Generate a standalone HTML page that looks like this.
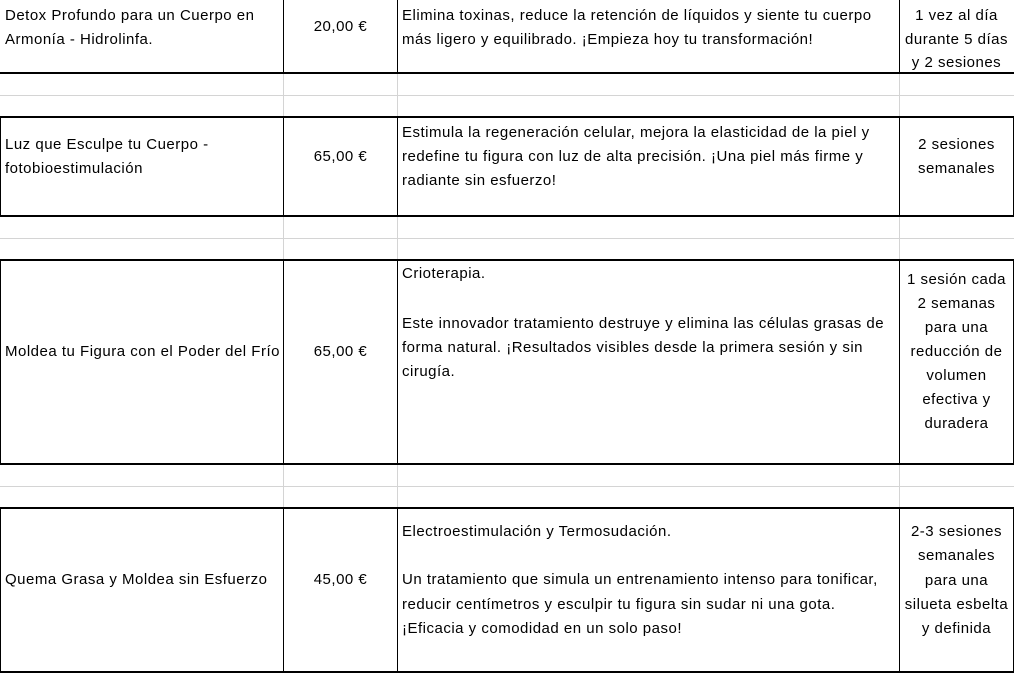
<!DOCTYPE html>
<html><head><meta charset="utf-8"><style>
body{margin:0;width:1014px;height:673px;background:#fff;position:relative;overflow:hidden;font-family:"Liberation Sans",sans-serif;font-size:15px;letter-spacing:0.5px;color:#000}
.h,.v{position:absolute;background:#000}
.g{position:absolute;background:#d4d4d4}
.t{position:absolute;line-height:24px;white-space:nowrap;margin-top:2px}
.c{text-align:center}
</style></head><body>
<div class="g" style="left:0;top:95px;width:1014px;height:1px"></div>
<div class="g" style="left:0;top:238px;width:1014px;height:1px"></div>
<div class="g" style="left:0;top:486px;width:1014px;height:1px"></div>
<div class="g" style="left:283px;top:73px;width:1px;height:44px"></div>
<div class="g" style="left:397px;top:73px;width:1px;height:44px"></div>
<div class="g" style="left:899px;top:73px;width:1px;height:44px"></div>
<div class="g" style="left:283px;top:216px;width:1px;height:44px"></div>
<div class="g" style="left:397px;top:216px;width:1px;height:44px"></div>
<div class="g" style="left:899px;top:216px;width:1px;height:44px"></div>
<div class="g" style="left:283px;top:464px;width:1px;height:44px"></div>
<div class="g" style="left:397px;top:464px;width:1px;height:44px"></div>
<div class="g" style="left:899px;top:464px;width:1px;height:44px"></div>
<div class="h" style="left:0;top:72px;width:1014px;height:2px"></div>
<div class="h" style="left:0;top:116px;width:1014px;height:2px"></div>
<div class="h" style="left:0;top:215px;width:1014px;height:2px"></div>
<div class="h" style="left:0;top:259px;width:1014px;height:2px"></div>
<div class="h" style="left:0;top:463px;width:1014px;height:2px"></div>
<div class="h" style="left:0;top:507px;width:1014px;height:2px"></div>
<div class="h" style="left:0;top:671px;width:1014px;height:2px"></div>
<div class="v" style="left:283px;top:0;width:1px;height:73px"></div>
<div class="v" style="left:397px;top:0;width:1px;height:73px"></div>
<div class="v" style="left:899px;top:0;width:1px;height:73px"></div>
<div class="v" style="left:0;top:117px;width:1px;height:99px"></div>
<div class="v" style="left:283px;top:117px;width:1px;height:99px"></div>
<div class="v" style="left:397px;top:117px;width:1px;height:99px"></div>
<div class="v" style="left:899px;top:117px;width:1px;height:99px"></div>
<div class="v" style="left:1013px;top:117px;width:1px;height:99px"></div>
<div class="v" style="left:0;top:260px;width:1px;height:204px"></div>
<div class="v" style="left:283px;top:260px;width:1px;height:204px"></div>
<div class="v" style="left:397px;top:260px;width:1px;height:204px"></div>
<div class="v" style="left:899px;top:260px;width:1px;height:204px"></div>
<div class="v" style="left:1013px;top:260px;width:1px;height:204px"></div>
<div class="v" style="left:0;top:508px;width:1px;height:165px"></div>
<div class="v" style="left:283px;top:508px;width:1px;height:165px"></div>
<div class="v" style="left:397px;top:508px;width:1px;height:165px"></div>
<div class="v" style="left:899px;top:508px;width:1px;height:165px"></div>
<div class="v" style="left:1013px;top:508px;width:1px;height:165px"></div>

<div class="t" style="left:5px;top:2px">Detox Profundo para un Cuerpo en<br>Armonía - Hidrolinfa.</div>
<div class="t c" style="left:284px;width:113px;top:13px">20,00 €</div>
<div class="t" style="left:402px;top:2px">Elimina toxinas, reduce la retención de líquidos y siente tu cuerpo<br>más ligero y equilibrado. ¡Empieza hoy tu transformación!</div>
<div class="t c" style="left:900px;width:113px;top:2px;line-height:23.5px">1 vez al día<br>durante 5 días<br>y 2 sesiones</div>

<div class="t" style="left:5px;top:131px">Luz que Esculpe tu Cuerpo -<br>fotobioestimulación</div>
<div class="t c" style="left:284px;width:113px;top:143px">65,00 €</div>
<div class="t" style="left:402px;top:119px">Estimula la regeneración celular, mejora la elasticidad de la piel y<br>redefine tu figura con luz de alta precisión. ¡Una piel más firme y<br>radiante sin esfuerzo!</div>
<div class="t c" style="left:900px;width:113px;top:131px">2 sesiones<br>semanales</div>

<div class="t" style="left:5px;top:338px">Moldea tu Figura con el Poder del Frío</div>
<div class="t c" style="left:284px;width:113px;top:338px">65,00 €</div>
<div class="t" style="left:402px;top:260px">Crioterapia.</div>
<div class="t" style="left:402px;top:310px">Este innovador tratamiento destruye y elimina las células grasas de<br>forma natural. ¡Resultados visibles desde la primera sesión y sin<br>cirugía.</div>
<div class="t c" style="left:900px;width:113px;top:266px">1 sesión cada<br>2 semanas<br>para una<br>reducción de<br>volumen<br>efectiva y<br>duradera</div>

<div class="t" style="left:5px;top:566px">Quema Grasa y Moldea sin Esfuerzo</div>
<div class="t c" style="left:284px;width:113px;top:566px">45,00 €</div>
<div class="t" style="left:402px;top:518px">Electroestimulación y Termosudación.</div>
<div class="t" style="left:402px;top:566px;line-height:24.5px">Un tratamiento que simula un entrenamiento intenso para tonificar,<br>reducir centímetros y esculpir tu figura sin sudar ni una gota.<br>¡Eficacia y comodidad en un solo paso!</div>
<div class="t c" style="left:900px;width:113px;top:518px;line-height:24.3px">2-3 sesiones<br>semanales<br>para una<br>silueta esbelta<br>y definida</div>
</body></html>
